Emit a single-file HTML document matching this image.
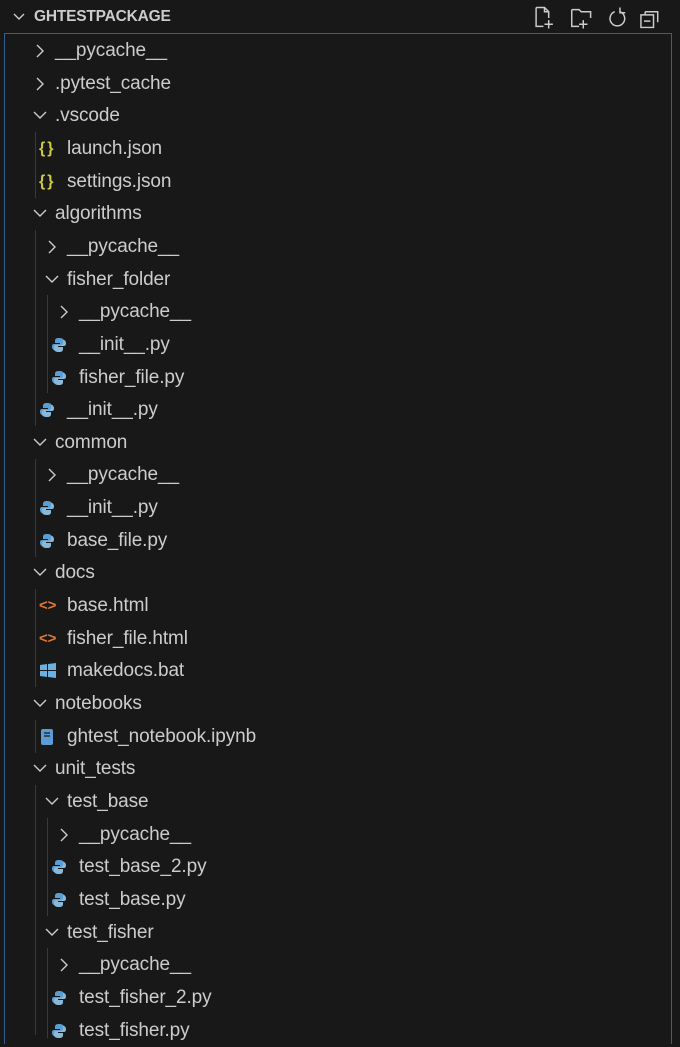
<!DOCTYPE html>
<html><head><style>
body{margin:0;background:#181818;width:680px;height:1031px;overflow:hidden;font-family:"Liberation Sans",sans-serif;color:#cccccc;position:relative}
.hdr{position:absolute;left:0;top:0;width:680px;height:33px;}
.hdr .t{position:absolute;left:34px;top:8px;font-size:15.5px;font-weight:bold;color:#cccccc;letter-spacing:-0.2px}
.box{position:absolute;left:4px;top:33px;width:666px;height:1010px;border:1px solid #2f5f93;border-bottom:none}
.row{position:absolute;left:0;height:33px;font-size:19px;line-height:33px;white-space:nowrap;letter-spacing:-0.1px}
.guide{position:absolute;width:1px;background:#3a3a3a}
svg{position:absolute}
</style></head><body>
<div class="hdr">
<svg style="left:12px;top:11px" width="14" height="12" viewBox="0 0 14 12"><path d="M2 3l5 5 5-5" stroke="#ccc" stroke-width="1.4" fill="none"/></svg>
<div class="t">GHTESTPACKAGE</div>
<svg style="left:534px;top:5px" width="130" height="26" viewBox="0 0 124 24" fill="none" stroke="#ccc" stroke-width="1.4">
<path d="M2 2h8l4 4v6M2 2v18h7M10 2v4h4M14 14v8M10 18h8"/>
<path d="M36 4h7l2 2h9v6M36 4v16h7M47 14v8M43 18h8"/>
<path d="M77 6a7 7 0 1 0 5 0M82 2v5h5" />
<path d="M106 6h12v10M102 9h12v12h-12zM105 15h6M106 6v3"/>
</svg>
</div>
<div class="box"></div>
<div id="t"></div>
<script>
var rows=[
[0,'c','__pycache__'],[0,'c','.pytest_cache'],[0,'o','.vscode'],[1,'j','launch.json'],[1,'j','settings.json'],
[0,'o','algorithms'],[1,'c','__pycache__'],[1,'o','fisher_folder'],[2,'c','__pycache__'],[2,'p','__init__.py'],[2,'p','fisher_file.py'],[1,'p','__init__.py'],
[0,'o','common'],[1,'c','__pycache__'],[1,'p','__init__.py'],[1,'p','base_file.py'],
[0,'o','docs'],[1,'h','base.html'],[1,'h','fisher_file.html'],[1,'w','makedocs.bat'],
[0,'o','notebooks'],[1,'n','ghtest_notebook.ipynb'],
[0,'o','unit_tests'],[1,'o','test_base'],[2,'c','__pycache__'],[2,'p','test_base_2.py'],[2,'p','test_base.py'],
[1,'o','test_fisher'],[2,'c','__pycache__'],[2,'p','test_fisher_2.py'],[2,'p','test_fisher.py']];
var h='',H=32.65;
h+='<div class="guide" style="left:35px;top:132px;height:66px"></div>';
h+='<div class="guide" style="left:35px;top:230px;height:196px"></div>';
h+='<div class="guide" style="left:47px;top:295px;height:98px"></div>';
h+='<div class="guide" style="left:35px;top:459px;height:98px"></div>';
h+='<div class="guide" style="left:35px;top:589px;height:98px"></div>';
h+='<div class="guide" style="left:35px;top:720px;height:33px"></div>';
h+='<div class="guide" style="left:35px;top:785px;height:250px"></div>';
h+='<div class="guide" style="left:47px;top:818px;height:98px"></div>';
h+='<div class="guide" style="left:47px;top:948px;height:90px"></div>';
rows.forEach(function(r,i){
 var top=34+i*H, lv=r[0], tx=55+lv*12, ic='';
 var cx=33+lv*12;
 if(r[1]=='c') ic='<svg style="left:'+cx+'px;top:9px" width="14" height="16" viewBox="0 0 14 16"><path d="M4 2l6 6-6 6" stroke="#ccc" stroke-width="1.4" fill="none"/></svg>';
 else if(r[1]=='o') ic='<svg style="left:'+(cx-1)+'px;top:9px" width="16" height="14" viewBox="0 0 16 14"><path d="M2 4l6 6 6-6" stroke="#ccc" stroke-width="1.4" fill="none"/></svg>';
 else {
  tx=67+(lv-1)*12; var ix=39+(lv-1)*12;
  if(r[1]=='j') ic='<span style="position:absolute;left:'+ix+'px;top:0;color:#cbcb41;font-weight:bold;font-size:16px;letter-spacing:2px">{}</span>';
  else if(r[1]=='h') ic='<span style="position:absolute;left:'+ix+'px;top:0;color:#e37933;font-weight:bold;font-size:15px">&lt;&gt;</span>';
  else if(r[1]=='p') ic='<svg style="left:'+ix+'px;top:9px" width="16" height="16" viewBox="0 0 16 16"><path d="M8 1c-3 0-4 1-4 3v2h5v1H3c-2 0-2 2-2 3s1 3 2 3h1v-2c0-2 1-3 3-3h4c1 0 2-1 2-2V4c0-2-2-3-5-3z" fill="#5a9fd4"/><path d="M8 15c3 0 4-1 4-3v-2H7V9h6c2 0 2-2 2-3s-1-3-2-3h-1v2c0 2-1 3-3 3H5c-1 0-2 1-2 2v2c0 2 2 3 5 3z" fill="#8ab8d8"/></svg>';
  else if(r[1]=='w') ic='<svg style="left:'+ix+'px;top:8px" width="18" height="18" viewBox="0 0 18 18"><path d="M1 3l7-1v6H1zM9 2l8-1v7H9zM1 9h7v6l-7-1zM9 9h8v7l-8-1z" fill="#6ab0e0"/></svg>';
  else if(r[1]=='n') ic='<svg style="left:'+(ix+1)+'px;top:8px" width="14" height="18" viewBox="0 0 14 18"><rect x="1" y="1" width="12" height="16" rx="2" fill="#5d9bd5"/><path d="M4 5h6M4 8h6" stroke="#181818" stroke-width="1.2"/></svg>';
 }
 h+='<div class="row" style="top:'+top.toFixed(1)+'px;width:680px">'+ic+'<span style="position:absolute;left:'+tx+'px">'+r[2]+'</span></div>';
});
document.getElementById('t').innerHTML=h;
</script>
</body></html>
